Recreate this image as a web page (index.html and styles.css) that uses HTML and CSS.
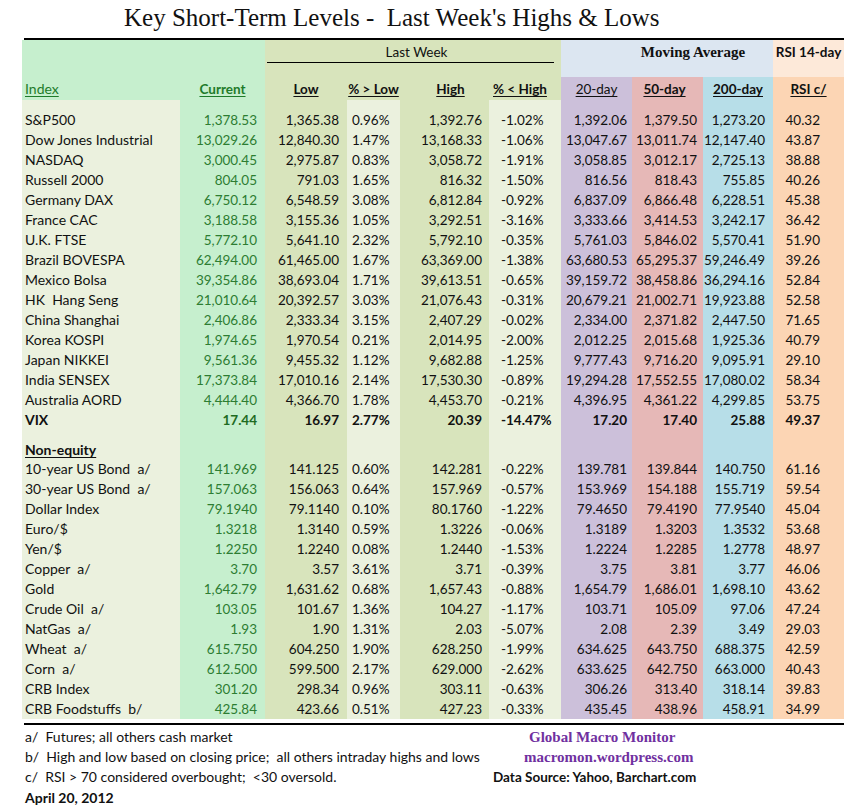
FILE: index.html
```html
<!DOCTYPE html>
<html>
<head>
<meta charset="utf-8">
<link rel="stylesheet" href="styles.css">
</head>
<body>
<div class="page">
  <div class="title">Key Short-Term Levels -&nbsp; Last Week's Highs &amp; Lows</div>
  <div class="rule"></div>
  <table class="grid">
    <colgroup>
      <col class="c-idx"><col class="c-cur"><col class="c-low"><col class="c-plow"><col class="c-high"><col class="c-phigh"><col class="c-d20"><col class="c-d50"><col class="c-d200"><col class="c-rsi">
    </colgroup>
    <thead>
      <tr class="h1">
        <th colspan="2" class="bg-green"></th>
        <th colspan="4" class="bg-olive"><div class="lw">Last Week</div></th>
        <th colspan="3" class="bg-ma ma">Moving Average</th>
        <th class="bg-rsih rsih">RSI 14-day</th>
      </tr>
      <tr class="h2">
        <th class="bg-green lbl-idx"><u>Index</u></th>
        <th class="bg-green lbl-cur"><u>Current</u></th>
        <th class="bg-olive"><u>Low</u></th>
        <th class="bg-olive"><u>% &gt; Low</u></th>
        <th class="bg-olive lbl-high"><u>High</u></th>
        <th class="bg-olive lbl-phigh"><u>% &lt; High</u></th>
        <th class="bg-d20 normal"><u>20-day</u></th>
        <th class="bg-d50 lbl-d50"><u>50-day</u></th>
        <th class="bg-d200"><u>200-day</u></th>
        <th class="bg-rsi"><u>RSI c/</u></th>
      </tr>
    </thead>
    <tbody>
      <tr class="gap"><td></td><td></td><td></td><td></td><td></td><td></td><td></td><td></td><td></td><td></td></tr>
      <tr class="row"><td>S&amp;P500</td><td>1,378.53</td><td>1,365.38</td><td>0.96%</td><td>1,392.76</td><td>-1.02%</td><td>1,392.06</td><td>1,379.50</td><td>1,273.20</td><td>40.32</td></tr>
      <tr class="row"><td>Dow Jones Industrial</td><td>13,029.26</td><td>12,840.30</td><td>1.47%</td><td>13,168.33</td><td>-1.06%</td><td>13,047.67</td><td>13,011.74</td><td>12,147.40</td><td>43.87</td></tr>
      <tr class="row"><td>NASDAQ</td><td>3,000.45</td><td>2,975.87</td><td>0.83%</td><td>3,058.72</td><td>-1.91%</td><td>3,058.85</td><td>3,012.17</td><td>2,725.13</td><td>38.88</td></tr>
      <tr class="row"><td>Russell 2000</td><td>804.05</td><td>791.03</td><td>1.65%</td><td>816.32</td><td>-1.50%</td><td>816.56</td><td>818.43</td><td>755.85</td><td>40.26</td></tr>
      <tr class="row"><td>Germany DAX</td><td>6,750.12</td><td>6,548.59</td><td>3.08%</td><td>6,812.84</td><td>-0.92%</td><td>6,837.09</td><td>6,866.48</td><td>6,228.51</td><td>45.38</td></tr>
      <tr class="row"><td>France CAC</td><td>3,188.58</td><td>3,155.36</td><td>1.05%</td><td>3,292.51</td><td>-3.16%</td><td>3,333.66</td><td>3,414.53</td><td>3,242.17</td><td>36.42</td></tr>
      <tr class="row"><td>U.K. FTSE</td><td>5,772.10</td><td>5,641.10</td><td>2.32%</td><td>5,792.10</td><td>-0.35%</td><td>5,761.03</td><td>5,846.02</td><td>5,570.41</td><td>51.90</td></tr>
      <tr class="row"><td>Brazil BOVESPA</td><td>62,494.00</td><td>61,465.00</td><td>1.67%</td><td>63,369.00</td><td>-1.38%</td><td>63,680.53</td><td>65,295.37</td><td>59,246.49</td><td>39.26</td></tr>
      <tr class="row"><td>Mexico Bolsa</td><td>39,354.86</td><td>38,693.04</td><td>1.71%</td><td>39,613.51</td><td>-0.65%</td><td>39,159.72</td><td>38,458.86</td><td>36,294.16</td><td>52.84</td></tr>
      <tr class="row"><td>HK&nbsp; Hang Seng</td><td>21,010.64</td><td>20,392.57</td><td>3.03%</td><td>21,076.43</td><td>-0.31%</td><td>20,679.21</td><td>21,002.71</td><td>19,923.88</td><td>52.58</td></tr>
      <tr class="row"><td>China Shanghai</td><td>2,406.86</td><td>2,333.34</td><td>3.15%</td><td>2,407.29</td><td>-0.02%</td><td>2,334.00</td><td>2,371.82</td><td>2,447.50</td><td>71.65</td></tr>
      <tr class="row"><td>Korea KOSPI</td><td>1,974.65</td><td>1,970.54</td><td>0.21%</td><td>2,014.95</td><td>-2.00%</td><td>2,012.25</td><td>2,015.68</td><td>1,925.36</td><td>40.79</td></tr>
      <tr class="row"><td>Japan NIKKEI</td><td>9,561.36</td><td>9,455.32</td><td>1.12%</td><td>9,682.88</td><td>-1.25%</td><td>9,777.43</td><td>9,716.20</td><td>9,095.91</td><td>29.10</td></tr>
      <tr class="row"><td>India SENSEX</td><td>17,373.84</td><td>17,010.16</td><td>2.14%</td><td>17,530.30</td><td>-0.89%</td><td>19,294.28</td><td>17,552.55</td><td>17,080.02</td><td>58.34</td></tr>
      <tr class="row"><td>Australia AORD</td><td>4,444.40</td><td>4,366.70</td><td>1.78%</td><td>4,453.70</td><td>-0.21%</td><td>4,396.95</td><td>4,361.22</td><td>4,299.85</td><td>53.75</td></tr>
      <tr class="row bold"><td>VIX</td><td>17.44</td><td>16.97</td><td>2.77%</td><td>20.39</td><td>-14.47%</td><td>17.20</td><td>17.40</td><td>25.88</td><td>49.37</td></tr>
      <tr class="gap"><td></td><td></td><td></td><td></td><td></td><td></td><td></td><td></td><td></td><td></td></tr>
      <tr class="row sect"><td><u>Non-equity</u></td><td></td><td></td><td></td><td></td><td></td><td></td><td></td><td></td><td></td></tr>
      <tr class="row"><td>10-year US Bond&nbsp; a/</td><td>141.969</td><td>141.125</td><td>0.60%</td><td>142.281</td><td>-0.22%</td><td>139.781</td><td>139.844</td><td>140.750</td><td>61.16</td></tr>
      <tr class="row"><td>30-year US Bond&nbsp; a/</td><td>157.063</td><td>156.063</td><td>0.64%</td><td>157.969</td><td>-0.57%</td><td>153.969</td><td>154.188</td><td>155.719</td><td>59.54</td></tr>
      <tr class="row"><td>Dollar Index</td><td>79.1940</td><td>79.1140</td><td>0.10%</td><td>80.1760</td><td>-1.22%</td><td>79.4650</td><td>79.4190</td><td>77.9540</td><td>45.04</td></tr>
      <tr class="row"><td>Euro/$</td><td>1.3218</td><td>1.3140</td><td>0.59%</td><td>1.3226</td><td>-0.06%</td><td>1.3189</td><td>1.3203</td><td>1.3532</td><td>53.68</td></tr>
      <tr class="row"><td>Yen/$</td><td>1.2250</td><td>1.2240</td><td>0.08%</td><td>1.2440</td><td>-1.53%</td><td>1.2224</td><td>1.2285</td><td>1.2778</td><td>48.97</td></tr>
      <tr class="row"><td>Copper&nbsp; a/</td><td>3.70</td><td>3.57</td><td>3.61%</td><td>3.71</td><td>-0.39%</td><td>3.75</td><td>3.81</td><td>3.77</td><td>46.06</td></tr>
      <tr class="row"><td>Gold</td><td>1,642.79</td><td>1,631.62</td><td>0.68%</td><td>1,657.43</td><td>-0.88%</td><td>1,654.79</td><td>1,686.01</td><td>1,698.10</td><td>43.62</td></tr>
      <tr class="row"><td>Crude Oil&nbsp; a/</td><td>103.05</td><td>101.67</td><td>1.36%</td><td>104.27</td><td>-1.17%</td><td>103.71</td><td>105.09</td><td>97.06</td><td>47.24</td></tr>
      <tr class="row"><td>NatGas&nbsp; a/</td><td>1.93</td><td>1.90</td><td>1.31%</td><td>2.03</td><td>-5.07%</td><td>2.08</td><td>2.39</td><td>3.49</td><td>29.03</td></tr>
      <tr class="row"><td>Wheat&nbsp; a/</td><td>615.750</td><td>604.250</td><td>1.90%</td><td>628.250</td><td>-1.99%</td><td>634.625</td><td>643.750</td><td>688.375</td><td>42.59</td></tr>
      <tr class="row"><td>Corn&nbsp; a/</td><td>612.500</td><td>599.500</td><td>2.17%</td><td>629.000</td><td>-2.62%</td><td>633.625</td><td>642.750</td><td>663.000</td><td>40.43</td></tr>
      <tr class="row"><td>CRB Index</td><td>301.20</td><td>298.34</td><td>0.96%</td><td>303.11</td><td>-0.63%</td><td>306.26</td><td>313.40</td><td>318.14</td><td>39.83</td></tr>
      <tr class="row"><td>CRB Foodstuffs&nbsp; b/</td><td>425.84</td><td>423.66</td><td>0.51%</td><td>427.23</td><td>-0.33%</td><td>435.45</td><td>438.96</td><td>458.91</td><td>34.99</td></tr>
    </tbody>
  </table>
  <div class="rule bottom"></div>
  <div class="footer">
    <div class="notes">
      <div class="line">a/&nbsp; Futures; all others cash market</div>
      <div class="line">b/&nbsp; High and low based on closing price;&nbsp; all others intraday highs and lows</div>
      <div class="line">c/&nbsp; RSI &gt; 70 considered overbought;&nbsp; &lt;30 oversold.</div>
      <div class="line date">April 20, 2012</div>
    </div>
    <div class="credits">
      <div class="line brand gm">Global Macro Monitor</div>
      <div class="line brand site">macromon.wordpress.com</div>
      <div class="line source">Data Source: Yahoo, Barchart.com</div>
    </div>
  </div>
</div>
</body>
</html>
```

FILE: styles.css
```css
html, body {
  margin: 0;
  padding: 0;
  background: #ffffff;
}
body {
  width: 844px;
  height: 806px;
  overflow: hidden;
  font-family: Lato, "Liberation Sans", sans-serif;
  font-size: 14px;
  color: #111;
}
.page {
  padding-left: 22px;
}
.title {
  height: 35px;
  padding-top: 3px;
  padding-left: 102px;
  font-family: "Liberation Serif", "Times New Roman", serif;
  font-size: 25px;
  line-height: 30px;
  color: #111;
  white-space: nowrap;
}
.rule {
  margin-left: 2px;
  border-top: 2px solid #000;
}
.rule.bottom {
  margin-top: 4px;
}
.grid {
  width: 822px;
  table-layout: fixed;
  border-collapse: collapse;
  border-spacing: 0;
  font-size: 13.5px;
  font-variant-numeric: tabular-nums;
}
.grid th, .grid td {
  padding: 0;
  white-space: nowrap;
  overflow: visible;
}
.c-idx { width: 158px; background: #ebf1de; }
.c-cur { width: 85px; background: #c6efce; }
.c-low { width: 82px; background: #d8e4bc; }
.c-plow { width: 53px; background: #ebf1de; }
.c-high { width: 89px; background: #d8e4bc; }
.c-phigh { width: 72px; background: #ebf1de; }
.c-d20 { width: 71px; background: #ccc0da; }
.c-d50 { width: 71px; background: #e6b8b7; }
.c-d200 { width: 70px; background: #b7dee8; }
.c-rsi { width: 71px; background: #fcd5b4; }

.bg-green { background: #c6efce; }
.bg-olive { background: #d8e4bc; }
.bg-ma { background: #dce6f1; }
.bg-rsih { background: #fde9d9; }
.bg-d20 { background: #ccc0da; }
.bg-d50 { background: #e6b8b7; }
.bg-d200 { background: #b7dee8; }
.bg-rsi { background: #fcd5b4; }

.h1 th {
  height: 37px;
  vertical-align: top;
}
.lw {
  margin: 0 7px 0 2px;
  padding-left: 12px;
  height: 22px;
  line-height: 25px;
  border-bottom: 1.5px solid #000;
  font-weight: normal;
  text-align: center;
  color: #111;
}
.grid th.ma {
  font-family: "Liberation Serif", "Times New Roman", serif;
  font-size: 15px;
  font-weight: bold;
  line-height: 25px;
  padding-left: 52px;
}
.grid th.rsih {
  font-weight: bold;
  line-height: 25px;
}
.h2 th {
  height: 21px;
  vertical-align: bottom;
  line-height: 18px;
  padding-bottom: 2px;
  font-weight: bold;
  text-align: center;
  color: #111;
}
.h2 th u {
  text-decoration-thickness: 1px;
  text-underline-offset: 2px;
}
.h2 th.lbl-idx {
  text-align: left;
  padding-left: 3px;
  font-weight: normal;
  color: #1e7b2a;
  font-size: 14px;
}
.h2 th.lbl-cur {
  color: #1e7b2a;
}
.h2 th.lbl-high {
  padding-left: 12px;
}
.h2 th.lbl-phigh {
  padding-left: 4px;
  text-align: left;
}
.h2 th.normal {
  font-weight: normal;
}
.h2 th.lbl-d50 {
  padding-right: 6px;
}

.gap td {
  height: 10px;
}
.row td {
  height: 20px;
  line-height: 20px;
  text-align: right;
}
.row.sect td {
  height: 19px;
  line-height: 19px;
}
.row td:nth-child(1) {
  text-align: left;
  padding-left: 3px;
  font-size: 14px;
}
.row td:nth-child(2) {
  padding-right: 8px;
  color: #2d7d32;
}
.row td:nth-child(3) { padding-right: 8px; }
.row td:nth-child(4) { text-align: left; padding-left: 5px; }
.row td:nth-child(5) { padding-right: 7px; }
.row td:nth-child(6) { text-align: left; padding-left: 12px; }
.row td:nth-child(7) { padding-right: 5px; }
.row td:nth-child(8) { padding-right: 6px; }
.row td:nth-child(9) { padding-right: 8px; }
.row td:nth-child(10) { padding-right: 24px; }
.row.bold td {
  font-weight: bold;
}
.row.bold td:nth-child(2) {
  color: #1e6b22;
}
.sect td:nth-child(1) {
  font-weight: bold;
}
.sect u {
  text-underline-offset: 2px;
}

.footer {
  display: flex;
  padding-top: 2px;
}
.notes {
  width: 448px;
  padding-left: 3px;
}
.credits {
  flex: 1;
}
.line {
  height: 20px;
  line-height: 20px;
  white-space: nowrap;
}
.date {
  font-weight: bold;
  height: 21px;
  line-height: 21px;
}
.brand {
  font-family: "Liberation Serif", "Times New Roman", serif;
  font-weight: bold;
  font-size: 15px;
  color: #7030a0;
}
.gm { padding-left: 56px; }
.site { padding-left: 51px; }
.source {
  padding-left: 20px;
  font-weight: bold;
  font-size: 13.5px;
}
```
